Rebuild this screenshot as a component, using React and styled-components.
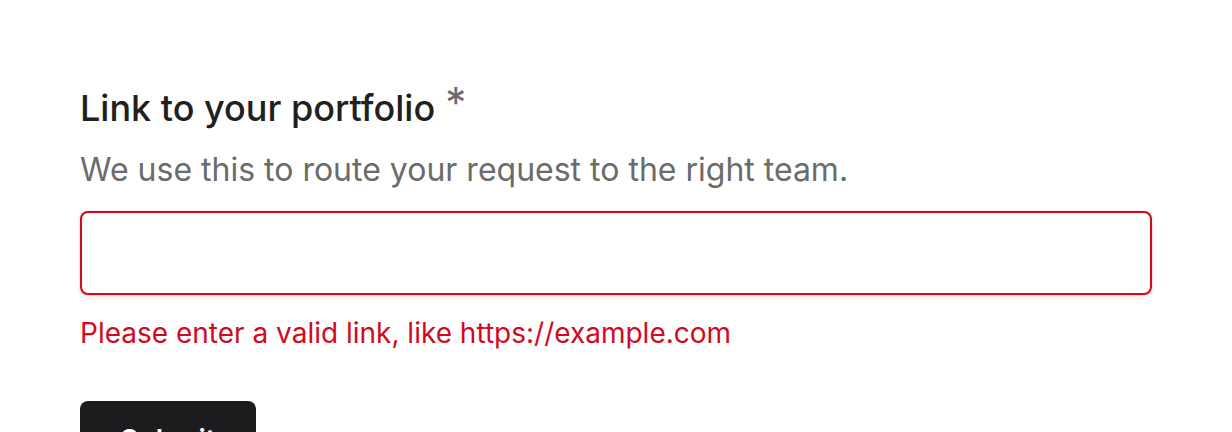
import React from 'react';
import styled, { createGlobalStyle } from 'styled-components';

const GlobalStyle = createGlobalStyle`
  body {
    margin: 0;
    background: #ffffff;
    font-family: Inter, "Noto Sans", sans-serif;
  }
`;

const Page = styled.div`
  padding: 86px 80px 40px 80px;
`;

const Field = styled.form`
  display: flex;
  flex-direction: column;
  align-items: flex-start;
`;

const Label = styled.label`
  display: flex;
  align-items: baseline;
  gap: 10px;
  font-size: 36px;
  font-weight: 500;
  line-height: 44px;
  color: #202020;
`;

// Required marker sits a bit above the label's cap line
const Required = styled.span`
  align-self: flex-start;
  margin-top: -4px;
  font-size: 42px;
  font-weight: 400;
  line-height: 42px;
  color: #6b6b6b;
`;

const Hint = styled.p`
  margin: 20px 0 0;
  font-size: 32px;
  line-height: 40px;
  color: #6b6b6b;
`;

const Input = styled.input`
  box-sizing: border-box;
  width: 100%;
  height: 84px;
  margin-top: 21px;
  padding: 0 24px;
  font: inherit;
  font-size: 30px;
  border: 2px solid ${(p) => (p.$invalid ? '#d10a1e' : '#c9c9c9')};
  border-radius: 8px;
  box-shadow: 0 0 0 1px rgba(209, 10, 30, 0.06), 0 2px 5px rgba(209, 10, 30, 0.14);
  outline: none;
`;

const ErrorText = styled.p`
  margin: 20px 0 0;
  font-size: 28px;
  line-height: 36px;
  color: #d10a1e;
`;

const Button = styled.button`
  margin-top: 50px;
  width: 176px;
  height: 78px;
  border: none;
  border-radius: 8px;
  background: #1c1c1e;
  color: #ffffff;
  font-family: inherit;
  font-size: 28px;
  font-weight: 600;
  cursor: pointer;
`;

export default function App() {
  return (
    <Page>
      <GlobalStyle />
      <Field onSubmit={(e) => e.preventDefault()}>
        <Label htmlFor="portfolio">
          Link to your portfolio
          <Required>*</Required>
        </Label>
        <Hint>We use this to route your request to the right team.</Hint>
        <Input id="portfolio" type="url" $invalid />
        <ErrorText>Please enter a valid link, like https://example.com</ErrorText>
        <Button type="submit">Submit</Button>
      </Field>
    </Page>
  );
}
